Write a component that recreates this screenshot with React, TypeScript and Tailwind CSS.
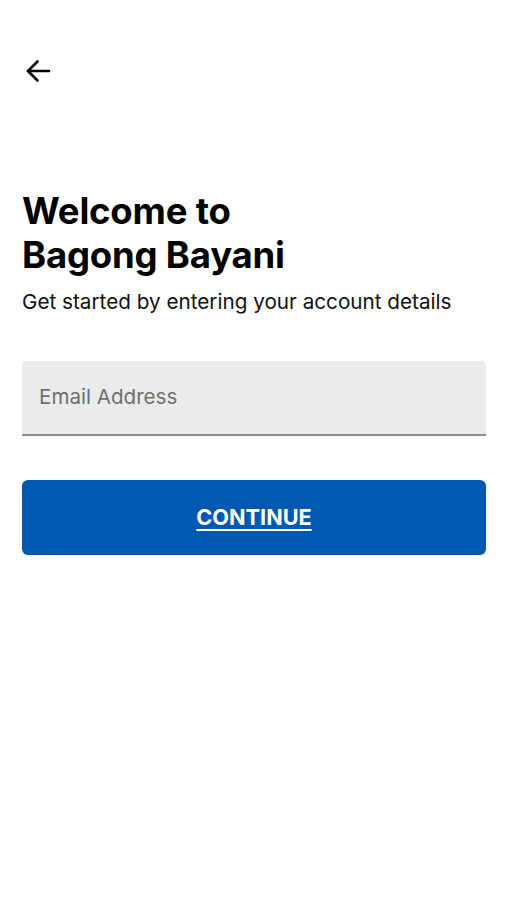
export default function App() {
    return (
        <div className="min-h-[900px] w-full bg-white font-['Inter',sans-serif] text-black">
            <div className="pl-[22px] pr-[21px] pt-[59px]">
                <button className="ml-[3px] flex h-[24px] w-[26px] items-center">
                    <svg width="26" height="24" viewBox="0 0 26 24" fill="none" stroke="currentColor" strokeWidth="2.6" strokeLinecap="round" strokeLinejoin="round">
                        <path d="M3 12H24" />
                        <path d="M12.5 2.5L3 12l9.5 9.5" />
                    </svg>
                </button>

                <h1 className="mt-[106px] text-[36.5px] font-bold leading-[44px] tracking-[-0.2px]">
                    Welcome to
                    <br />
                    Bagong Bayani
                </h1>
                <p className="mt-[11px] text-[20.7px] leading-[28px] text-[#111]">
                    Get started by entering your account details
                </p>

                <div className="mt-[45px] flex h-[75px] items-center rounded-t-[4px] border-b-2 border-[#8a8a8a] bg-[#ebebeb] px-[17px]">
                    <input
                        type="email"
                        placeholder="Email Address"
                        className="w-full bg-transparent text-[20.6px] text-black outline-none placeholder:text-[#6f6f6f]"
                    />
                </div>

                <button className="mt-[44px] flex h-[75px] w-full items-center justify-center rounded-[6px] bg-[#0058b0] text-[21.7px] font-bold text-white underline underline-offset-[4px]">
                    CONTINUE
                </button>
            </div>
        </div>
    );
}
